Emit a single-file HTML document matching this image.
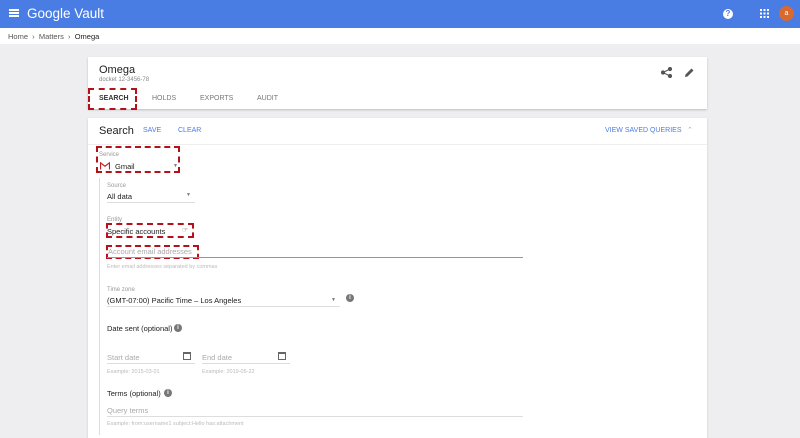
<!DOCTYPE html><html><head><style>
*{margin:0;padding:0;box-sizing:border-box}
body{width:800px;height:435px;overflow:hidden;background:#eeedef;font-family:"Liberation Sans",sans-serif;position:relative;color:#212121}
.a{position:absolute}
.dash{position:absolute;border:2px dashed #b3121c}
.lbl{font-size:6px;color:#999}
.hint{font-size:5.5px;color:#bbb}
.info{position:absolute;width:8px;height:8px;border-radius:50%;background:#777;color:#fff;font-size:6px;text-align:center;line-height:8px;font-weight:bold}
.line{position:absolute;height:1px;background:#ddd}
</style></head><body>
<div class="a" style="left:0;top:0;width:800px;height:28px;background:#4a7de3"></div>
<div class="a" style="left:9px;top:9px;width:10px;height:1.5px;background:#fff;box-shadow:0 3px 0 #fff,0 6px 0 #fff"></div>
<div class="a" style="left:27px;top:6px;color:#fff;font-size:13.5px">Google Vault</div>
<div class="a" style="left:723px;top:9px;width:10px;height:10px;border-radius:50%;background:#fff;color:#4a7de3;font-size:8px;font-weight:bold;text-align:center;line-height:10px">?</div>
<svg class="a" style="left:760px;top:9px" width="9" height="9"><g fill="#fff"><rect x="0" y="0" width="2" height="2"/><rect x="3.5" y="0" width="2" height="2"/><rect x="7" y="0" width="2" height="2"/><rect x="0" y="3.5" width="2" height="2"/><rect x="3.5" y="3.5" width="2" height="2"/><rect x="7" y="3.5" width="2" height="2"/><rect x="0" y="7" width="2" height="2"/><rect x="3.5" y="7" width="2" height="2"/><rect x="7" y="7" width="2" height="2"/></g></svg>
<div class="a" style="left:779px;top:6px;width:15px;height:15px;border-radius:50%;background:#d9692f;color:#fff;font-size:7px;text-align:center;line-height:15px">a</div>
<div class="a" style="left:0;top:28px;width:800px;height:16px;background:#fff"></div>
<div class="a" style="left:8px;top:32px;font-size:7.5px;color:#555">Home &nbsp;›&nbsp; Matters &nbsp;›&nbsp; <span style="color:#222">Omega</span></div>

<div class="a" style="left:88px;top:57px;width:619px;height:52px;background:#fff;box-shadow:0 1px 2px rgba(0,0,0,.2)"></div>
<div class="a" style="left:99px;top:64px;font-size:11px">Omega</div>
<div class="a" style="left:99px;top:77px;font-size:6px;color:#888">docket 12-3456-78</div>
<div class="a" style="left:99px;top:95px;font-size:7px;font-weight:bold;color:#333">SEARCH</div>
<div class="a" style="left:152px;top:95px;font-size:7px;color:#777">HOLDS</div>
<div class="a" style="left:200px;top:95px;font-size:7px;color:#777">EXPORTS</div>
<div class="a" style="left:257px;top:95px;font-size:7px;color:#777">AUDIT</div>
<div class="dash" style="left:88px;top:88px;width:49px;height:22px"></div>
<svg class="a" style="left:661px;top:67px" width="11" height="11"><g fill="#555" stroke="#555"><circle cx="9" cy="2" r="1.6"/><circle cx="2" cy="5.5" r="1.6"/><circle cx="9" cy="9" r="1.6"/><path d="M9 2L2 5.5L9 9" fill="none" stroke-width="1"/></g></svg>
<svg class="a" style="left:684px;top:67px" width="11" height="11"><path d="M1 10L1.5 7.5L7.5 1.5L9.5 3.5L3.5 9.5Z" fill="#555"/></svg>

<div class="a" style="left:88px;top:118px;width:619px;height:320px;background:#fff;box-shadow:0 1px 2px rgba(0,0,0,.15)"></div>
<div class="line" style="left:88px;top:144px;width:619px;background:#eee"></div>
<div class="a" style="left:99px;top:125px;font-size:11px">Search</div>
<div class="a" style="left:143px;top:127px;font-size:7px;color:#4a7de3">SAVE</div>
<div class="a" style="left:178px;top:127px;font-size:7px;color:#4a7de3">CLEAR</div>
<div class="a" style="left:605px;top:127px;font-size:7px;color:#4a7de3">VIEW SAVED QUERIES</div>
<div class="a" style="left:687px;top:126px;font-size:7px;color:#aaa">⌃</div>

<div class="lbl a" style="left:99px;top:152px">Service</div>
<svg class="a" style="left:100px;top:162px" width="10" height="8"><path d="M0.5 7.5V0.8L5 4.2L9.5 0.8V7.5" fill="none" stroke="#c5221f" stroke-width="1.2"/></svg>
<div class="a" style="left:115px;top:162px;font-size:7.5px">Gmail</div>
<div class="a" style="left:173px;top:163px;font-size:5px;color:#777">▼</div>
<div class="dash" style="left:96px;top:146px;width:84px;height:27px"></div>
<div class="a" style="left:99px;top:178px;width:1px;height:257px;background:#ddd"></div>

<div class="lbl a" style="left:107px;top:183px">Source</div>
<div class="a" style="left:107px;top:192px;font-size:7.5px">All data</div>
<div class="a" style="left:186px;top:192px;font-size:5px;color:#777">▼</div>
<div class="line" style="left:107px;top:202px;width:88px"></div>

<div class="lbl a" style="left:107px;top:217px">Entity</div>
<div class="a" style="left:107px;top:227px;font-size:7.5px">Specific accounts</div>
<div class="a" style="left:182px;top:226px;font-size:7px;color:#555">☞</div>
<div class="dash" style="left:106px;top:223px;width:88px;height:15px"></div>
<div class="a" style="left:108px;top:247px;font-size:7.5px;color:#aaa">Account email addresses</div>
<div class="dash" style="left:106px;top:245px;width:93px;height:14px"></div>
<div class="a" style="left:107px;top:257px;width:416px;height:1px;background:#7f97c8"></div>
<div class="hint a" style="left:107px;top:264px">Enter email addresses separated by commas</div>

<div class="lbl a" style="left:107px;top:287px">Time zone</div>
<div class="a" style="left:107px;top:296px;font-size:7.5px">(GMT-07:00) Pacific Time – Los Angeles</div>
<div class="a" style="left:331px;top:297px;font-size:5px;color:#777">▼</div>
<div class="line" style="left:107px;top:306px;width:233px"></div>
<div class="info" style="left:346px;top:294px">i</div>

<div class="a" style="left:107px;top:324px;font-size:7.5px">Date sent (optional)</div>
<div class="info" style="left:174px;top:324px">i</div>
<div class="a" style="left:107px;top:353px;font-size:7.5px;color:#aaa">Start date</div>
<div class="a" style="left:183px;top:352px;width:8px;height:8px;border:1.2px solid #666;border-top-width:2px"></div>
<div class="line" style="left:107px;top:363px;width:88px"></div>
<div class="hint a" style="left:107px;top:369px">Example: 2015-03-01</div>
<div class="a" style="left:202px;top:353px;font-size:7.5px;color:#aaa">End date</div>
<div class="a" style="left:278px;top:352px;width:8px;height:8px;border:1.2px solid #666;border-top-width:2px"></div>
<div class="line" style="left:202px;top:363px;width:88px"></div>
<div class="hint a" style="left:202px;top:369px">Example: 2019-05-22</div>

<div class="a" style="left:107px;top:389px;font-size:7.5px">Terms (optional)</div>
<div class="info" style="left:164px;top:389px">i</div>
<div class="a" style="left:107px;top:406px;font-size:7.5px;color:#aaa">Query terms</div>
<div class="line" style="left:107px;top:416px;width:416px"></div>
<div class="hint a" style="left:107px;top:421px">Example: from:username1 subject:Hello has:attachment</div>
</body></html>
